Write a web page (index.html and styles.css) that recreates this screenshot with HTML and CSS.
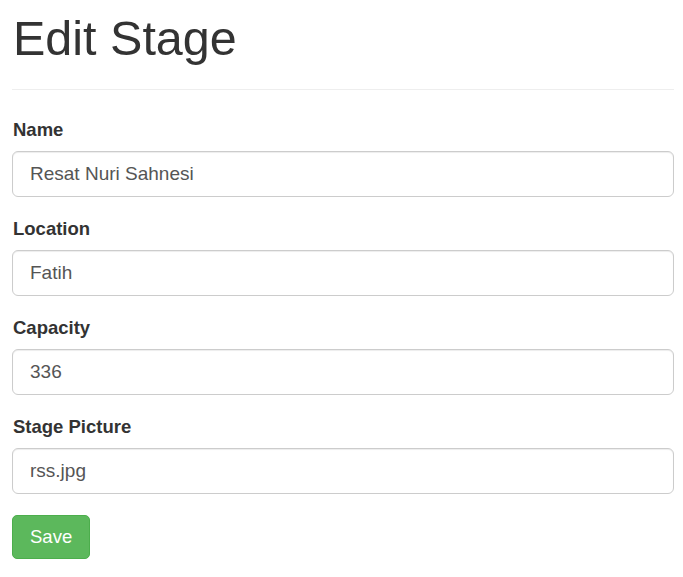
FILE: index.html
```html
<!DOCTYPE html>
<html>
<head>
<meta charset="utf-8">
<link rel="stylesheet" href="styles.css">
</head>
<body>
<div class="page">
  <h1 class="title">Edit Stage</h1>
  <hr class="divider">
  <form class="form">
    <div class="form-group">
      <label class="label">Name</label>
      <input class="input" type="text" value="Resat Nuri Sahnesi">
    </div>
    <div class="form-group">
      <label class="label">Location</label>
      <input class="input" type="text" value="Fatih">
    </div>
    <div class="form-group">
      <label class="label">Capacity</label>
      <input class="input" type="text" value="336">
    </div>
    <div class="form-group">
      <label class="label">Stage Picture</label>
      <input class="input" type="text" value="rss.jpg">
    </div>
    <button class="btn-save" type="button">Save</button>
  </form>
</div>
</body>
</html>
```
FILE: styles.css
```css
html, body {
  margin: 0;
  padding: 0;
  background: #fff;
}
body {
  font-family: "Liberation Sans", Arial, sans-serif;
  color: #333;
}
.page {
  padding: 0 9px 0 12px;
}
.title {
  font-size: 48.5px;
  font-weight: normal;
  line-height: 1.1;
  margin: 12px 0 0 1px;
  color: #333;
}
.divider {
  border: 0;
  border-top: 1px solid #eee;
  margin: 24px 0 0 0;
}
.form {
  display: flex;
  flex-direction: column;
  margin-top: 26px;
}
.form-group {
  display: flex;
  flex-direction: column;
  margin-bottom: 18px;
}
.label {
  font-weight: bold;
  font-size: 18.5px;
  line-height: 26px;
  margin: 1px 0 8px 1px;
}
.input {
  box-sizing: border-box;
  height: 46px;
  padding: 10px 17px;
  font-family: "Liberation Sans", Arial, sans-serif;
  font-size: 19px;
  color: #555;
  border: 1px solid #ccc;
  border-radius: 6px;
  box-shadow: inset 0 1px 1px rgba(0,0,0,.075);
  outline: none;
}
.btn-save {
  align-self: flex-start;
  box-sizing: border-box;
  height: 44px;
  padding: 0 17px;
  margin-top: 3px;
  font-family: "Liberation Sans", Arial, sans-serif;
  font-size: 18.5px;
  color: #fff;
  background: #5cb85c;
  border: 1px solid #4cae4c;
  border-radius: 5px;
}
```
